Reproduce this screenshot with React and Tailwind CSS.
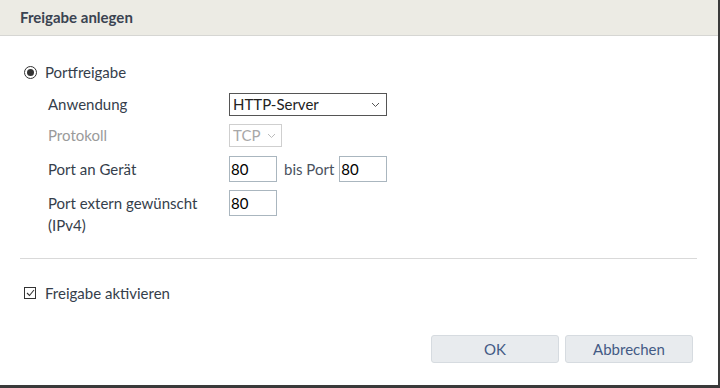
import React from 'react';

// Dialog "Freigabe anlegen"
const Chevron = ({ color }) => (
    <svg width="9" height="6" viewBox="0 0 9 6" fill="none">
        <path d="M1 1l3.5 3.5L8 1" stroke={color} strokeWidth="1" />
    </svg>
);

const PortInput = ({ value }) => (
    <div className="w-[48px] h-[26px] border border-[#aab6bf] bg-white flex items-center pl-px text-[15px] text-black">
        {value}
    </div>
);

export default function App() {
    return (
        <div className="w-[720px] h-[388px] bg-white border-r-2 border-b-[3px] border-[#3a3a3a] flex flex-col text-[#353e4b]" style={{ fontFamily: 'Lato, "Liberation Sans", sans-serif' }}>
            {/* Kopfzeile */}
            <div className="h-[36px] shrink-0 bg-[#ecebe4] border-b border-[#d6d6d3] flex items-center px-5">
                <span className="text-[15px] font-bold text-[#3a4351]">Freigabe anlegen</span>
            </div>

            <div className="px-5 flex flex-col">
                {/* Portfreigabe */}
                <div className="mt-[27px] flex items-center h-[18px]">
                    <div className="ml-[4px] w-[13px] h-[13px] rounded-full border border-[#333] flex items-center justify-center">
                        <div className="w-[7px] h-[7px] rounded-full bg-[#333]"></div>
                    </div>
                    <span className="ml-[8px] text-[15px]">Portfreigabe</span>
                </div>

                {/* Formular */}
                <div className="ml-[28px] mt-[12px] flex flex-col gap-2">
                    <div className="flex items-center h-[23px]">
                        <span className="w-[181px] text-[15px]">Anwendung</span>
                        <div className="w-[158px] h-[23px] border border-[#555] flex items-center justify-between pl-[3px] pr-[6px] text-[15px] text-[#222]">
                            <span>HTTP-Server</span>
                            <Chevron color="#555" />
                        </div>
                    </div>
                    <div className="flex items-center h-[23px]">
                        <span className="w-[181px] text-[15px] text-[#9a9a9a]">Protokoll</span>
                        <div className="w-[53px] h-[23px] border border-[#cfcfcf] flex items-center justify-between pl-[3px] pr-[5px] text-[15px] text-[#a8a8a8]">
                            <span>TCP</span>
                            <Chevron color="#bbb" />
                        </div>
                    </div>
                    <div className="flex items-center h-[26px] mt-px">
                        <span className="w-[181px] text-[15px]">Port an Gerät</span>
                        <PortInput value="80" />
                        <span className="ml-[7px] mr-[5px] text-[15px] text-[#4a5260]">bis Port</span>
                        <PortInput value="80" />
                    </div>
                    <div className="flex items-start">
                        <span className="w-[181px] text-[15px] leading-[22px] mt-[2px]">Port extern gewünscht<br />(IPv4)</span>
                        <PortInput value="80" />
                    </div>
                </div>

                {/* Trennlinie */}
                <div className="mt-[22px] mr-[1px] border-t border-[#d9d9d9]"></div>

                {/* Freigabe aktivieren */}
                <div className="mt-[25px] flex items-center h-[18px]">
                    <div className="ml-[4px] w-[12px] h-[12px] border border-[#333] flex items-center justify-center">
                        <svg width="9" height="8" viewBox="0 0 9 8" fill="none">
                            <path d="M1 4l2.5 2.5L8 1" stroke="#333" strokeWidth="1.1" />
                        </svg>
                    </div>
                    <span className="ml-[9px] text-[15px]">Freigabe aktivieren</span>
                </div>

                {/* Schaltflächen */}
                <div className="mt-[33px] flex justify-end gap-[6px] mr-[5px]">
                    <button className="w-[128px] h-[28px] rounded-[3px] bg-[#e8ebee] border border-[#d6dbe0] text-[15px] text-[#435a85]">OK</button>
                    <button className="w-[128px] h-[28px] rounded-[3px] bg-[#e8ebee] border border-[#d6dbe0] text-[15px] text-[#435a85]">Abbrechen</button>
                </div>
            </div>
        </div>
    );
}
